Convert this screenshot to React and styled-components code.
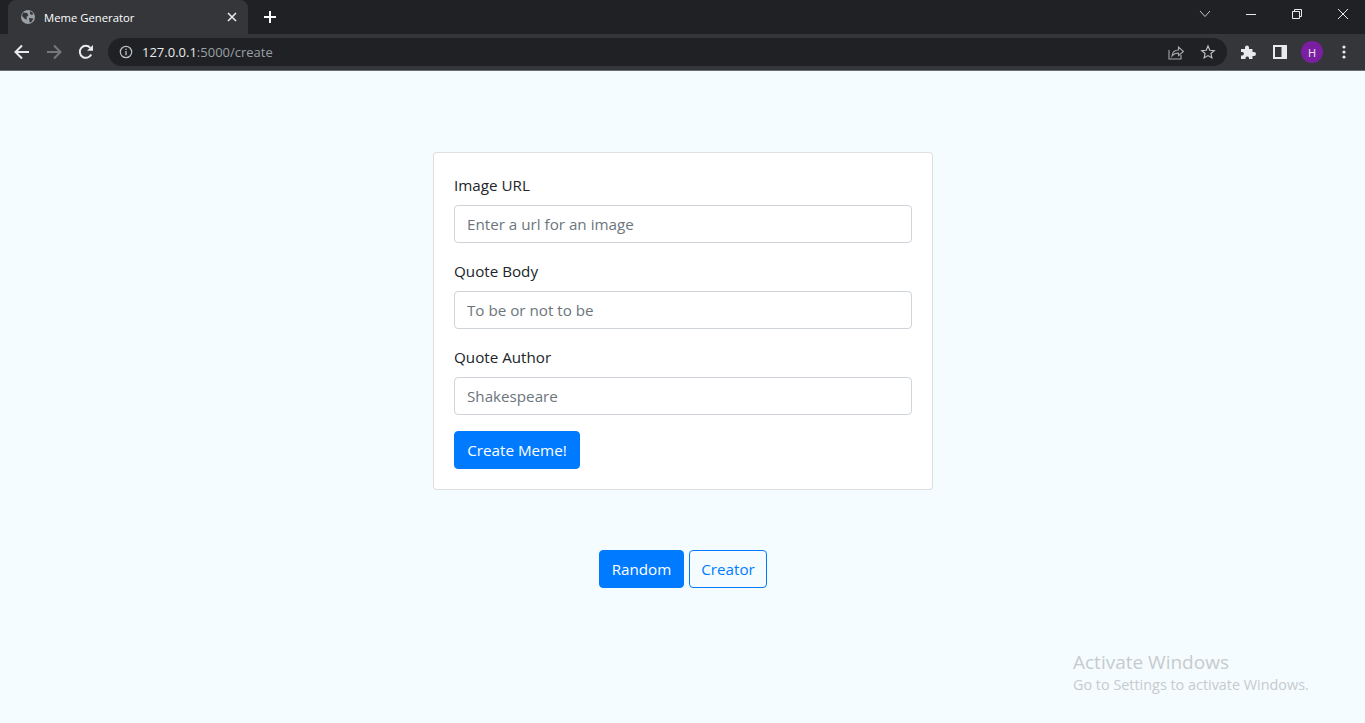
import React from 'react';
import styled, { createGlobalStyle } from 'styled-components';

const GlobalStyle = createGlobalStyle`
    html, body {
        margin: 0;
        height: 100%;
        overflow: hidden;
    }
    body {
        background: #f5fcff;
        font-family: "Open Sans", "Noto Sans", sans-serif;
        color: #212529;
    }
    * {
        box-sizing: border-box;
    }
`;

const fields = [
    { label: 'Image URL', placeholder: 'Enter a url for an image' },
    { label: 'Quote Body', placeholder: 'To be or not to be' },
    { label: 'Quote Author', placeholder: 'Shakespeare' },
];

function Browser() {
    return (
        <BrowserStyled>
            <TabStrip>
                <Tab>
                    <svg width="16" height="16" viewBox="0 0 16 16">
                        <circle cx="8" cy="8" r="7" fill="#9aa0a6" />
                        <path d="M3 3.5 L7 4 L8.5 6 L6.5 8 L7 10.5 L5 10 L2 7 Z M10 2 L13.5 4.5 L12 6 L10 5 Z M9 9 L13.5 9.5 L11 13.5 L9.5 13 Z" fill="#35363a" />
                    </svg>
                    <TabTitle>Meme Generator</TabTitle>
                    <svg width="10" height="10" viewBox="0 0 10 10">
                        <path d="M1 1 L9 9 M9 1 L1 9" stroke="#e8eaed" strokeWidth="1.6" />
                    </svg>
                </Tab>
                <NewTab>
                    <svg width="14" height="14" viewBox="0 0 14 14">
                        <path d="M7 1 V13 M1 7 H13" stroke="#fff" strokeWidth="2" />
                    </svg>
                </NewTab>
                <WindowControls>
                    <svg width="14" height="14" viewBox="0 0 14 14">
                        <path d="M2 4 L7 9.5 L12 4" fill="none" stroke="#c4c7c9" strokeWidth="1" />
                    </svg>
                    <svg width="12" height="12" viewBox="0 0 12 12">
                        <path d="M1 6.5 H11" stroke="#e8eaed" strokeWidth="1" />
                    </svg>
                    <svg width="12" height="12" viewBox="0 0 12 12">
                        <path d="M1.5 3.5 H8.5 V10.5 H1.5 Z M3.5 3.5 V1.5 H10.5 V8.5 H8.5" fill="none" stroke="#e8eaed" strokeWidth="1" />
                    </svg>
                    <svg width="12" height="12" viewBox="0 0 12 12">
                        <path d="M1 1 L11 11 M11 1 L1 11" stroke="#e8eaed" strokeWidth="1" />
                    </svg>
                </WindowControls>
            </TabStrip>
            <Toolbar>
                <NavIcons>
                    <svg width="16" height="16" viewBox="0 0 16 16">
                        <path d="M15 8 H2 M8 1.5 L1.5 8 L8 14.5" fill="none" stroke="#e8eaed" strokeWidth="2" />
                    </svg>
                    <svg width="16" height="16" viewBox="0 0 16 16">
                        <path d="M1 8 H14 M8 1.5 L14.5 8 L8 14.5" fill="none" stroke="#75777a" strokeWidth="2" />
                    </svg>
                    <svg width="16" height="16" viewBox="0 0 16 16">
                        <path d="M13.2 10.5 A6 6 0 1 1 12.3 3.8" fill="none" stroke="#e8eaed" strokeWidth="2" />
                        <path d="M9 6.8 H15 V1 Z" fill="#e8eaed" />
                    </svg>
                </NavIcons>
                <Omnibox>
                    <svg width="14" height="14" viewBox="0 0 14 14">
                        <circle cx="7" cy="7" r="5.7" fill="none" stroke="#bdc1c6" strokeWidth="1.2" />
                        <path d="M7 6 V10.3 M7 3.8 V5" stroke="#bdc1c6" strokeWidth="1.3" />
                    </svg>
                    <Url>127.0.0.1<span>:5000/create</span></Url>
                    <OmniboxActions>
                        <svg width="16" height="16" viewBox="0 0 16 16">
                            <path d="M1 6 V15 H13 V11" fill="none" stroke="#a6a9ad" strokeWidth="1.1" />
                            <path d="M4 12 C4.5 8 7 6 10.5 6 V3 L15.5 7.5 L10.5 11.5 V9 C8 9 5.5 10 4 12 Z" fill="none" stroke="#a6a9ad" strokeWidth="1.1" />
                        </svg>
                        <svg width="16" height="16" viewBox="0 0 16 16">
                            <path d="M8 2 L9.8 6.2 L14.3 6.6 L10.9 9.5 L11.9 13.9 L8 11.6 L4.1 13.9 L5.1 9.5 L1.7 6.6 L6.2 6.2 Z" fill="none" stroke="#c4c7ca" strokeWidth="1.1" />
                        </svg>
                    </OmniboxActions>
                </Omnibox>
                <ToolbarIcons>
                    <svg width="16" height="16" viewBox="0 0 16 16">
                        <path d="M1 5 H5 V3.5 A2 2 0 0 1 9 3.5 V5 H12.5 V8 H14 A2 2 0 0 1 14 12 H12.5 V15 H9 V14 A1.8 1.8 0 0 0 5.5 14 V15 H1 V11.5 H2.5 A1.8 1.8 0 0 0 2.5 8 H1 Z" fill="#e8eaed" />
                    </svg>
                    <svg width="14" height="14" viewBox="0 0 14 14">
                        <path fillRule="evenodd" d="M0 0 H14 V14 H0 Z M2 2 V12 H8.5 V2 Z" fill="#e8eaed" />
                    </svg>
                    <Avatar>H</Avatar>
                    <svg width="4" height="14" viewBox="0 0 4 14">
                        <circle cx="2" cy="2" r="1.6" fill="#e8eaed" />
                        <circle cx="2" cy="7" r="1.6" fill="#e8eaed" />
                        <circle cx="2" cy="12" r="1.6" fill="#e8eaed" />
                    </svg>
                </ToolbarIcons>
            </Toolbar>
        </BrowserStyled>
    );
}

function App() {
    return (
        <>
            <GlobalStyle />
            <Browser />
            <Page>
                <Card>
                    {fields.map((f) => (
                        <FormGroup key={f.label}>
                            <Label>{f.label}</Label>
                            <Input type="text" placeholder={f.placeholder} />
                        </FormGroup>
                    ))}
                    <Button $primary $width={126} type="button">Create Meme!</Button>
                </Card>
                <Actions>
                    <Button $primary $width={85} type="button">Random</Button>
                    <Button $width={78} type="button">Creator</Button>
                </Actions>
            </Page>
            <Watermark>
                <strong>Activate Windows</strong>
                <span>Go to Settings to activate Windows.</span>
            </Watermark>
        </>
    );
}

const BrowserStyled = styled.header`
    height: 71px;
    background: #35363a;
    border-bottom: 1px solid #6a6e72;
`;

const TabStrip = styled.div`
    height: 34px;
    background: #202124;
    display: flex;
    align-items: flex-end;
    padding-left: 8px;
`;

const Tab = styled.div`
    width: 240px;
    height: 34px;
    background: #35363a;
    border-radius: 8px 8px 0 0;
    display: flex;
    align-items: center;
    padding: 0 11px 0 12px;
    color: #fff;
`;

const TabTitle = styled.span`
    flex: 1;
    margin-left: 8px;
    font-size: 11.3px;
    color: #fff;
`;

const NewTab = styled.div`
    width: 28px;
    height: 34px;
    margin-left: 8px;
    display: flex;
    align-items: center;
    justify-content: center;
`;

const WindowControls = styled.div`
    margin-left: auto;
    height: 34px;
    width: 183px;
    padding-bottom: 6px;
    display: grid;
    grid-template-columns: repeat(4, 46px);
    align-items: center;
    justify-items: center;
`;

const Toolbar = styled.div`
    height: 36px;
    display: flex;
    align-items: center;
    padding: 0 14px 0 14px;
`;

const NavIcons = styled.div`
    display: flex;
    align-items: center;
    gap: 16px;
    width: 94px;
`;

const Omnibox = styled.div`
    width: 1119px;
    height: 28px;
    border-radius: 14px;
    background: #202124;
    display: flex;
    align-items: center;
    padding: 0 11px;
`;

const Url = styled.div`
    margin-left: 9px;
    font-size: 13px;
    color: #e8eaed;
    span {
        color: #9aa0a6;
    }
`;

const OmniboxActions = styled.div`
    margin-left: auto;
    display: flex;
    align-items: center;
    gap: 16px;
`;

const ToolbarIcons = styled.div`
    flex: 1;
    padding-left: 13px;
    display: flex;
    align-items: center;
    gap: 17px;
    svg:last-child {
        margin-left: 2px;
    }
`;

const Avatar = styled.div`
    width: 22px;
    height: 22px;
    margin-left: -3px;
    border-radius: 50%;
    background: #7b1fa2;
    color: #f0e6f5;
    font-size: 11px;
    display: flex;
    align-items: center;
    justify-content: center;
`;

const Page = styled.main`
    display: flex;
    flex-direction: column;
    align-items: center;
    padding: 81px 0 0 1px;
`;

const Card = styled.form`
    width: 500px;
    padding: 20px;
    background: #fff;
    border: 1px solid rgba(0, 0, 0, 0.125);
    border-radius: 4px;
`;

const FormGroup = styled.div`
    margin-bottom: 16px;
`;

const Label = styled.label`
    display: block;
    height: 24px;
    margin-bottom: 8px;
    font-size: 15.2px;
    line-height: 24px;
`;

const Input = styled.input`
    display: block;
    width: 100%;
    height: 38px;
    padding: 6px 12px;
    font: inherit;
    font-size: 15.2px;
    background: #fff;
    border: 1px solid #ced4da;
    border-radius: 4px;
    &::placeholder {
        color: #6c757d;
        opacity: 1;
    }
`;

const Button = styled.button`
    width: ${(p) => p.$width}px;
    height: 38px;
    padding: 0;
    font: inherit;
    font-size: 15.2px;
    border-radius: 4px;
    border: 1px solid #007bff;
    background: ${(p) => (p.$primary ? '#007bff' : 'transparent')};
    color: ${(p) => (p.$primary ? '#fff' : '#007bff')};
`;

const Actions = styled.div`
    margin-top: 60px;
    display: flex;
    gap: 5px;
`;

const Watermark = styled.div`
    position: absolute;
    left: 1073px;
    top: 650px;
    display: flex;
    flex-direction: column;
    color: #c6cbcd;
    strong {
        font-weight: 400;
        font-size: 19px;
        line-height: 25px;
    }
    span {
        font-size: 14.4px;
        line-height: 20px;
    }
`;

export default App;
